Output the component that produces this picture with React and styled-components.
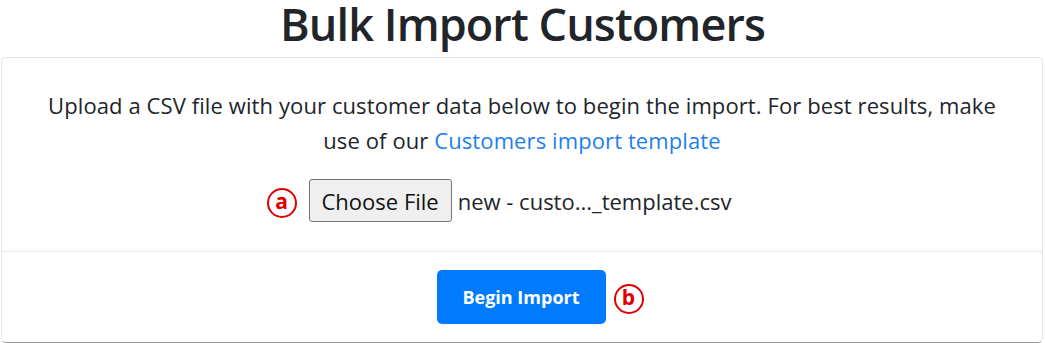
import styled, { createGlobalStyle } from "styled-components";

const GlobalStyle = createGlobalStyle`
  html, body {
    margin: 0;
    padding: 0;
    background: #ffffff;
  }
  body {
    font-family: "Open Sans", "Noto Sans", sans-serif;
    color: #212529;
  }
`;

const Page = styled.div`
  width: 1045px;
  height: 343px;
  overflow: hidden;
  display: flex;
  flex-direction: column;
`;

const Title = styled.h1`
  margin: 0;
  height: 57px;
  font-size: 45px;
  font-weight: 600;
  line-height: 48px;
  text-align: center;
  letter-spacing: -0.9px;
  color: #212529;
`;

const Card = styled.div`
  margin: 0 2px 0 1px;
  flex: 1;
  display: flex;
  flex-direction: column;
  border: 1px solid #e6e6e6;
  border-bottom-color: #9a9a9a;
  border-radius: 5px;
`;

const CardBody = styled.div`
  height: 194px;
  box-sizing: border-box;
  padding: 30px 38px 0;
  display: flex;
  flex-direction: column;
  align-items: center;
  border-bottom: 1px solid #e8e8e8;
`;

const Lead = styled.p`
  margin: 0;
  font-size: 22px;
  letter-spacing: 0.1px;
  line-height: 35px;
  text-align: center;
`;

const Link = styled.a`
  color: #1f7fe8;
  text-decoration: none;
`;

const FileRow = styled.div`
  margin-top: 21px;
  padding-right: 46px;
  display: flex;
  align-items: center;
  gap: 6px;
  font-size: 22px;
`;

const Marker = styled.span`
  width: 30px;
  height: 30px;
  box-sizing: border-box;
  margin-top: 4px;
  border: 2.5px solid #e00000;
  border-radius: 50%;
  color: #e00000;
  font-weight: 700;
  font-size: 21px;
  line-height: 23px;
  display: flex;
  justify-content: center;
  margin-right: ${(p) => p.$gap || 0}px;
`;

const ChooseButton = styled.span`
  height: 43px;
  box-sizing: border-box;
  padding: 0 12px;
  display: flex;
  align-items: center;
  background: #efefef;
  border: 1px solid #767676;
  border-radius: 3px;
  font-size: 22px;
  color: #111;
`;

const FileName = styled.span`
  color: #212529;
`;

const CardFooter = styled.div`
  flex: 1;
  display: flex;
  justify-content: center;
  align-items: flex-start;
  padding-top: 18px;
  padding-left: 36px;
`;

const ButtonGroup = styled.div`
  display: flex;
  align-items: center;
  gap: 8px;
`;

const PrimaryButton = styled.button`
  width: 169px;
  height: 54px;
  border: none;
  border-radius: 5px;
  background: #007bff;
  color: #ffffff;
  font-family: "Open Sans", "Noto Sans", sans-serif;
  font-weight: 700;
  font-size: 18px;
  cursor: pointer;
`;

export default function App() {
  return (
    <Page>
      <GlobalStyle />
      <Title>Bulk Import Customers</Title>
      <Card>
        <CardBody>
          <Lead>
            Upload a CSV file with your customer data below to begin the import. For best results, make use of our{" "}
            <Link href="#">Customers import template</Link>
          </Lead>
          <FileRow>
            <Marker $gap={6}>a</Marker>
            <ChooseButton>Choose File</ChooseButton>
            <FileName>new - custo..._template.csv</FileName>
          </FileRow>
        </CardBody>
        <CardFooter>
          <ButtonGroup>
            <PrimaryButton>Begin Import</PrimaryButton>
            <Marker>b</Marker>
          </ButtonGroup>
        </CardFooter>
      </Card>
    </Page>
  );
}
